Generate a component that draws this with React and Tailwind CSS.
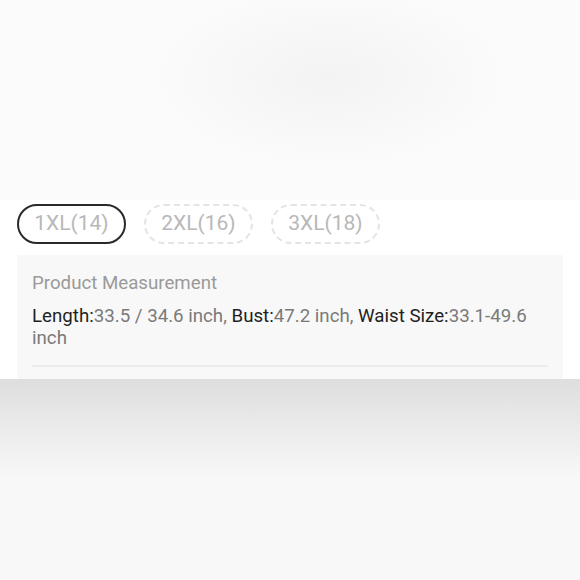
import React from "react";

const sizes = [
  { label: "1XL(14)", active: true },
  { label: "2XL(16)", active: false },
  { label: "3XL(18)", active: false },
];

const SizePill = ({ label, active }) => (
  <div
    className={
      active
        ? "flex h-[40px] w-[109px] items-center justify-center rounded-full border-2 border-[#2a2a2a] text-[21px] text-[#b8b8b8]"
        : "flex h-[40px] w-[109px] items-center justify-center rounded-full border-2 border-dashed border-[#e4e4e4] text-[21px] text-[#b8b8b8]"
    }
  >
    {label}
  </div>
);

export default function App() {
  return (
    <div
      className="flex h-[580px] w-[580px] flex-col overflow-hidden bg-[#f8f8f8]"
      style={{ fontFamily: "Roboto, 'Liberation Sans', sans-serif" }}
    >
      <div className="h-[200px] bg-[#fbfbfb] bg-[radial-gradient(ellipse_180px_90px_at_330px_78px,#f3f3f3,#fbfbfb),radial-gradient(ellipse_120px_80px_at_20px_78px,#f4f4f4,transparent)]" />

      <div className="flex h-[179px] flex-col bg-white">
        <div className="flex items-center gap-[18px] px-[17px] pt-[4px]">
          {sizes.map((s) => (
            <SizePill key={s.label} {...s} />
          ))}
        </div>

        <div className="mx-[17px] mt-[11px] flex-1 bg-[#f8f8f8] px-[15px] pt-[17px]">
          <div className="text-[18.7px] leading-[22px] text-[#9a9a9a]">
            Product Measurement
          </div>
          <div className="mt-[11px] text-[18.7px] leading-[22px] text-[#7a7a7a]">
            <span className="text-[#1f1f1f]">Length:</span>33.5 / 34.6 inch,{" "}
            <span className="text-[#1f1f1f]">Bust:</span>47.2 inch,{" "}
            <span className="text-[#1f1f1f]">Waist Size:</span>33.1-49.6 inch
          </div>
          <div className="mt-[16px] h-[2px] bg-[#ececec]" />
        </div>
      </div>

      <div className="h-[100px] bg-gradient-to-b from-[#dedede] to-[#f8f8f8]" />
      <div className="flex-1 bg-[#f8f8f8]" />
    </div>
  );
}
